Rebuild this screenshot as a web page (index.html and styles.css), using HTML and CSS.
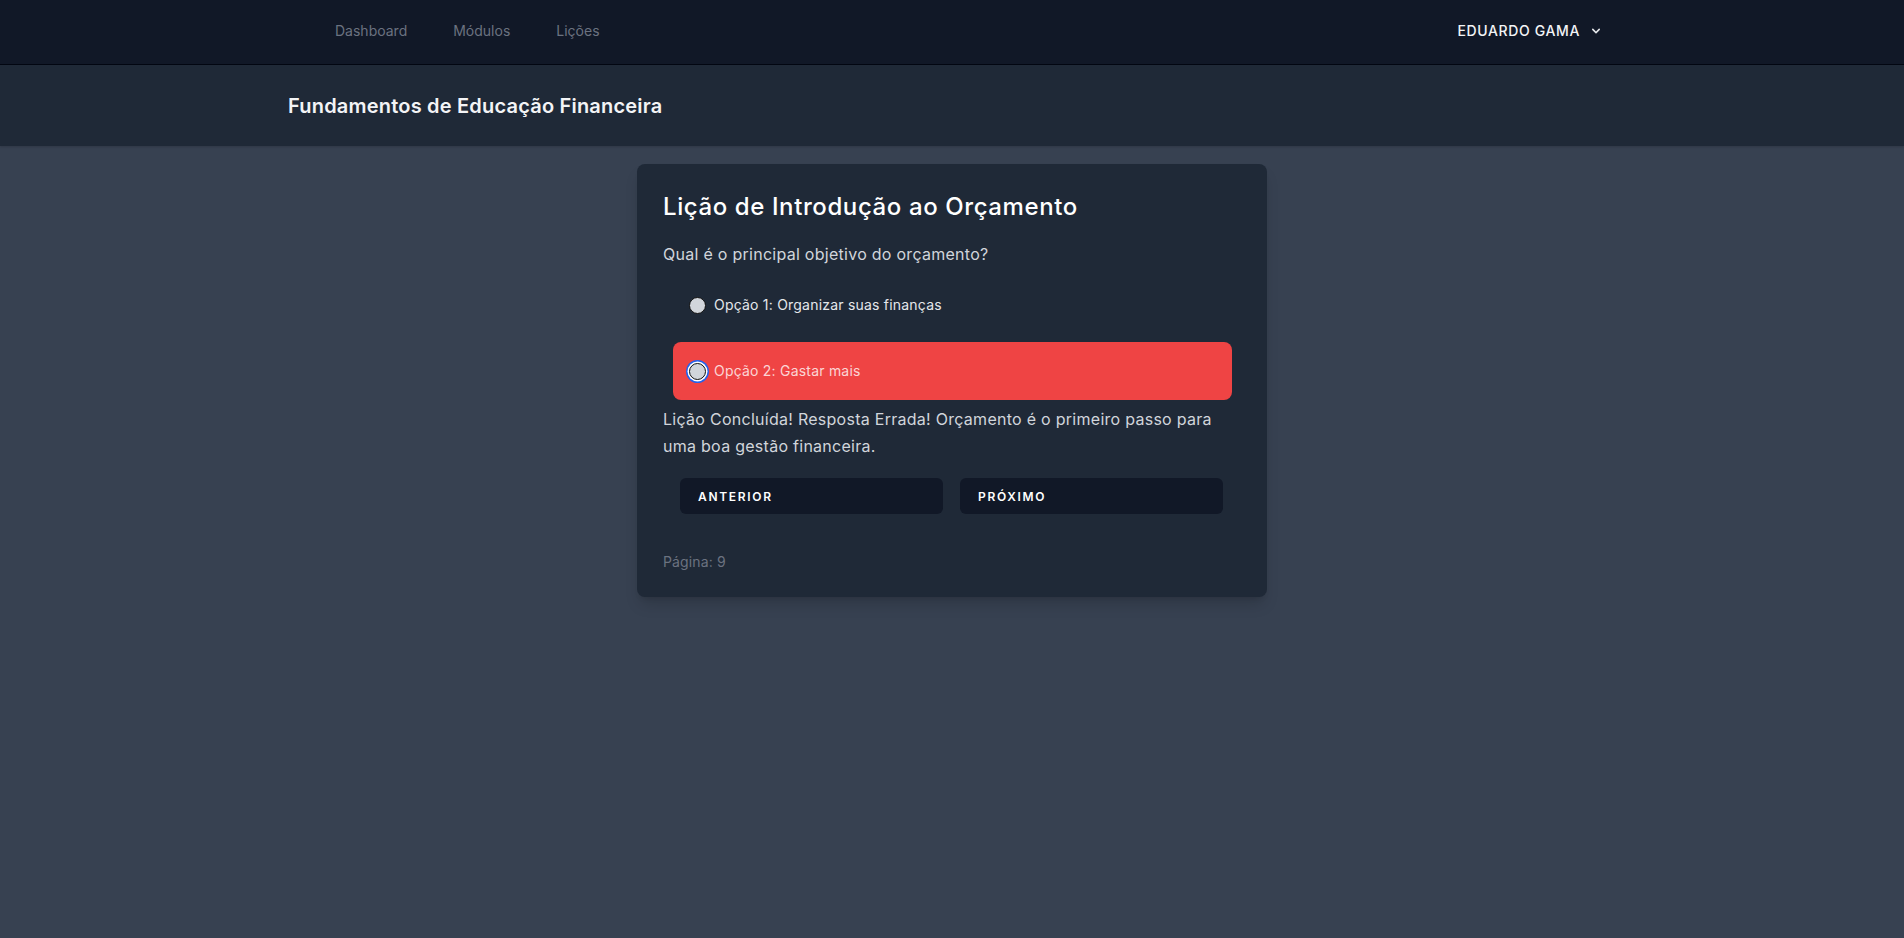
FILE: index.html
```html
<!DOCTYPE html>
<html lang="pt-BR">
<head>
<meta charset="utf-8">
<title>Lição de Introdução ao Orçamento</title>
<link rel="stylesheet" href="styles.css">
</head>
<body>
<nav class="nav">
  <div class="nav-inner">
    <div class="nav-links">
      <a class="nav-link" href="#">Dashboard</a>
      <a class="nav-link" href="#">Módulos</a>
      <a class="nav-link" href="#">Lições</a>
    </div>
    <button class="user-btn" type="button">
      <span>EDUARDO GAMA</span>
      <svg class="chevron" viewBox="0 0 20 20" width="16" height="16" fill="currentColor"><path fill-rule="evenodd" d="M5.293 7.293a1 1 0 011.414 0L10 10.586l3.293-3.293a1 1 0 111.414 1.414l-4 4a1 1 0 01-1.414 0l-4-4a1 1 0 010-1.414z" clip-rule="evenodd"/></svg>
    </button>
  </div>
</nav>
<header class="page-header">
  <div class="header-inner">
    <h2 class="header-title">Fundamentos de Educação Financeira</h2>
  </div>
</header>
<main class="main">
  <section class="card">
    <h1 class="card-title">Lição de Introdução ao Orçamento</h1>
    <p class="question">Qual é o principal objetivo do orçamento?</p>
    <div class="options">
      <label class="option">
        <span class="radio"></span>
        <span class="option-text">Opção 1: Organizar suas finanças</span>
      </label>
      <label class="option option-wrong">
        <span class="radio radio-checked"></span>
        <span class="option-text">Opção 2: Gastar mais</span>
      </label>
    </div>
    <p class="feedback">Lição Concluída! Resposta Errada! Orçamento é o primeiro passo para uma boa gestão financeira.</p>
    <div class="buttons">
      <button class="btn" type="button">Anterior</button>
      <button class="btn" type="button">Próximo</button>
    </div>
    <p class="page-num">Página: 9</p>
  </section>
</main>
</body>
</html>
```
FILE: styles.css
```css
* { box-sizing: border-box; }
html, body { margin: 0; padding: 0; }
body {
  background: #374151;
  font-family: Inter, "Noto Sans", sans-serif;
  color: #d1d5db;
  min-height: 938px;
}
.nav {
  background: #111827;
  border-bottom: 1px solid #030712;
  height: 65px;
}
.nav-inner {
  max-width: 1328px;
  margin: 0 auto;
  height: 64px;
  display: flex;
  align-items: center;
  justify-content: space-between;
}
.nav-links {
  display: flex;
  gap: 38px;
  margin-left: 43px;
  margin-top: -2px;
}
.nav-link {
  padding: 0 4px;
  font-size: 14px;
  line-height: 20px;
  color: #6b7280;
  text-decoration: none;
}
.user-btn {
  display: inline-flex;
  align-items: center;
  background: transparent;
  border: 0;
  padding: 8px 12px;
  margin-top: -2px;
  font-family: inherit;
  font-size: 14px;
  font-weight: 500;
  line-height: 20px;
  color: #f3f4f6;
  letter-spacing: 0.045em;
}
.chevron { margin-left: 8px; color: #e5e7eb; }
.page-header {
  background: #1f2937;
  height: 81px;
  box-shadow: 0 1px 2px rgba(0,0,0,0.15);
}
.header-inner {
  max-width: 1328px;
  margin: 0 auto;
  height: 81px;
  display: flex;
  align-items: center;
}
.header-title {
  margin: 0;
  font-size: 20px;
  font-weight: 600;
  line-height: 28px;
  color: #f3f4f6;
  letter-spacing: 0.01em;
}
.main { padding-top: 18px; }
.card {
  width: 630px;
  margin: 0 auto;
  background: #1f2937;
  border-radius: 8px;
  padding: 24px 24px 24px 26px;
  box-shadow: 0 10px 15px -3px rgba(0,0,0,0.15), 0 4px 6px -4px rgba(0,0,0,0.15);
}
.card-title {
  margin: 2px 0 0;
  font-size: 24px;
  font-weight: 500;
  line-height: 34px;
  color: #ffffff;
  letter-spacing: 0.025em;
}
.question {
  margin: 18px 0 10px;
  font-size: 16px;
  line-height: 24px;
  color: #d1d5db;
  letter-spacing: 0.017em;
}
.options {
  display: flex;
  flex-direction: column;
  gap: 8px;
}
.option {
  display: flex;
  align-items: center;
  gap: 8px;
  margin: 0 11px 0 10px;
  padding: 17px 16px;
  border-radius: 8px;
  font-size: 14px;
  line-height: 24px;
  color: #e5e7eb;
  letter-spacing: 0.015em;
}
.option-wrong {
  background: #ef4444;
  color: #fbd5d5;
}
.radio {
  width: 17px;
  height: 17px;
  border-radius: 50%;
  background: #d1d5db;
  border: 1px solid #111;
  flex: none;
}
.radio-checked {
  box-shadow: 0 0 0 1.5px #ffffff, 0 0 0 3px #2563eb;
}
.feedback {
  margin: 6px 0 0;
  font-size: 16px;
  line-height: 27px;
  color: #d1d5db;
  letter-spacing: 0.017em;
}
.buttons {
  display: flex;
  gap: 17px;
  padding: 0 20px 0 17px;
  margin-top: 18px;
}
.btn {
  flex: 1;
  height: 36px;
  background: #111827;
  border: 0;
  border-radius: 6px;
  padding: 0 18px;
  text-align: left;
  font-family: inherit;
  font-size: 12px;
  font-weight: 600;
  letter-spacing: 0.14em;
  text-transform: uppercase;
  color: #ffffff;
}
.page-num {
  margin: 36px 0 0;
  font-size: 14px;
  line-height: 23px;
  color: #6b7280;
  letter-spacing: 0.01em;
}
```
